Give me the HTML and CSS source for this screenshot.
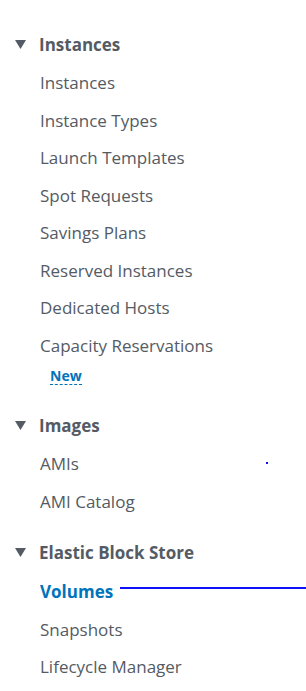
FILE: index.html
```html
<!DOCTYPE html>
<html lang="en">
<head>
    <meta charset="UTF-8">
    <meta name="viewport" content="width=device-width, initial-scale=1.0">
    <title>EC2 Navigation</title>
    <link rel="stylesheet" href="styles.css">
</head>
<body>

  <nav class="side-nav">
    <!-- Instances -->
    <section class="nav-section">
      <div class="nav-heading">
        <svg class="caret" width="11" height="9" viewBox="0 0 11 9"><path d="M0 0 L11 0 L5.5 9 Z"/></svg>
        <span>Instances</span>
      </div>
      <ul class="nav-list">
        <li>Instances</li>
        <li>Instance Types</li>
        <li>Launch Templates</li>
        <li>Spot Requests</li>
        <li>Savings Plans</li>
        <li>Reserved Instances</li>
        <li>Dedicated Hosts</li>
        <li>Capacity Reservations</li>
      </ul>
      <div class="badge-row"><span class="badge-new">New</span></div>
    </section>

    <!-- Images -->
    <section class="nav-section">
      <div class="nav-heading">
        <svg class="caret" width="11" height="9" viewBox="0 0 11 9"><path d="M0 0 L11 0 L5.5 9 Z"/></svg>
        <span>Images</span>
      </div>
      <ul class="nav-list">
        <li>AMIs</li>
        <li>AMI Catalog</li>
      </ul>
    </section>

    <!-- Elastic Block Store -->
    <section class="nav-section">
      <div class="nav-heading ebs">
        <svg class="caret" width="11" height="9" viewBox="0 0 11 9"><path d="M0 0 L11 0 L5.5 9 Z"/></svg>
        <span>Elastic Block Store</span>
      </div>
      <ul class="nav-list">
        <li class="active">Volumes</li>
        <li>Snapshots</li>
        <li>Lifecycle Manager</li>
      </ul>
    </section>
  </nav>

  <!-- annotation marks drawn over the page -->
  <div class="mark-line"></div>
  <div class="mark-dot"></div>

</body>
</html>
```

FILE: styles.css
```css
/* Estilo geral */
body {
    font-family: "Open Sans", "Liberation Sans", sans-serif;
    margin: 0;
    padding: 0;
    background-color: #fff;
    color: #545b64;
    position: relative;
    min-height: 691px;
}

.side-nav {
    padding-top: 25px;
}

.nav-section {
    margin-bottom: 13px;
}

.nav-heading {
    display: flex;
    align-items: center;
    height: 38px;
    margin-bottom: 1px;
    padding-left: 15px;
    font-size: 17px;
    font-weight: 700;
}

.nav-heading.ebs {
    margin-bottom: 2px;
}

.caret {
    fill: #545b64;
    margin-right: 13px;
}

.nav-list {
    list-style: none;
    margin: 0;
    padding: 0;
}

.nav-list li {
    height: 37.5px;
    line-height: 37.5px;
    padding-left: 40px;
    font-size: 17px;
}

.nav-list li.active {
    color: #0073bb;
    font-weight: 700;
}

/* Selo "New" */
.badge-row {
    padding-left: 50px;
    height: 17px;
    margin-bottom: 25px;
}

.badge-new {
    display: inline-block;
    font-size: 14px;
    font-weight: 700;
    line-height: 17px;
    color: #0073bb;
    border-bottom: 1px dashed #0073bb;
}

/* Marcas de anotação */
.mark-line {
    position: absolute;
    left: 120px;
    top: 587px;
    width: 186px;
    height: 2px;
    background-color: #1010f5;
}

.mark-dot {
    position: absolute;
    left: 266px;
    top: 462px;
    width: 2px;
    height: 2px;
    background-color: #1010f5;
}
```
